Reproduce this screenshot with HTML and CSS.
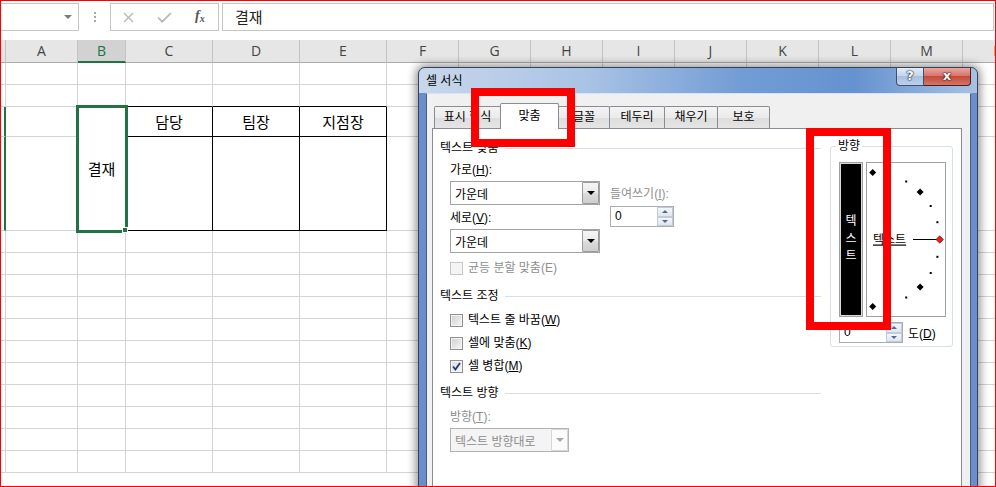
FILE: index.html
```html
<!DOCTYPE html>
<html lang="ko">
<head>
  <meta charset="UTF-8">
  <title>셀 서식</title>
  <link rel="stylesheet" href="styles.css">
</head>
<body>
  <div class="fbar">
    <div class="namebox"><i class="dd"></i></div>
    <div class="grip"><i class="dots"></i></div>
    <div class="fbtns">
      <svg class="ic-x" width="11" height="11" viewBox="0 0 11 11"><path d="M1 1L10 10M10 1L1 10" stroke="#b5b5b5" stroke-width="1.3" fill="none"/></svg>
      <svg class="ic-ok" width="15" height="11" viewBox="0 0 15 11"><path d="M1 5.5l4.2 4.2L14 1" stroke="#b5b5b5" stroke-width="1.7" fill="none"/></svg>
      <span class="fx"><i>f</i><i class="x">x</i></span>
    </div>
    <div class="finput">결재</div>
  </div>

  <table class="sheet">
    <colgroup>
      <col class="c-rh"><col class="c-72"><col class="c-48"><col class="c-87"><col class="c-87"><col class="c-87">
      <col class="c-72"><col class="c-72"><col class="c-72"><col class="c-72"><col class="c-72"><col class="c-72"><col class="c-72"><col class="c-72"><col class="c-72">
    </colgroup>
    <tr class="hdr"><th class="rh"></th><th>A</th><th class="sel">B</th><th>C</th><th>D</th><th>E</th><th>F</th><th>G</th><th>H</th><th>I</th><th>J</th><th>K</th><th>L</th><th>M</th><th>N</th></tr>
    <tr class="r22"><th class="rh"></th><td></td><td></td><td></td><td></td><td></td><td></td><td></td><td></td><td></td><td></td><td></td><td></td><td></td><td></td></tr>
    <tr class="r22"><th class="rh"></th><td></td><td></td><td class="bb"></td><td class="bb"></td><td class="bb"></td><td></td><td></td><td></td><td></td><td></td><td></td><td></td><td></td><td></td></tr>
    <tr class="r30"><th class="rh on"></th><td></td><td class="pick" rowspan="2">결재<span class="handle"></span></td><td class="bx">담당</td><td class="bx">팀장</td><td class="bx">지점장</td><td></td><td></td><td></td><td></td><td></td><td></td><td></td><td></td><td></td></tr>
    <tr class="r94"><th class="rh on"></th><td></td><td class="bx"></td><td class="bx"></td><td class="bx"></td><td></td><td></td><td></td><td></td><td></td><td></td><td></td><td></td><td></td></tr>
    <tr class="r22"><th class="rh"></th><td></td><td></td><td></td><td></td><td></td><td></td><td></td><td></td><td></td><td></td><td></td><td></td><td></td><td></td></tr>
    <tr class="r22"><th class="rh"></th><td></td><td></td><td></td><td></td><td></td><td></td><td></td><td></td><td></td><td></td><td></td><td></td><td></td><td></td></tr>
    <tr class="r22"><th class="rh"></th><td></td><td></td><td></td><td></td><td></td><td></td><td></td><td></td><td></td><td></td><td></td><td></td><td></td><td></td></tr>
    <tr class="r22"><th class="rh"></th><td></td><td></td><td></td><td></td><td></td><td></td><td></td><td></td><td></td><td></td><td></td><td></td><td></td><td></td></tr>
    <tr class="r22"><th class="rh"></th><td></td><td></td><td></td><td></td><td></td><td></td><td></td><td></td><td></td><td></td><td></td><td></td><td></td><td></td></tr>
    <tr class="r22"><th class="rh"></th><td></td><td></td><td></td><td></td><td></td><td></td><td></td><td></td><td></td><td></td><td></td><td></td><td></td><td></td></tr>
    <tr class="r22"><th class="rh"></th><td></td><td></td><td></td><td></td><td></td><td></td><td></td><td></td><td></td><td></td><td></td><td></td><td></td><td></td></tr>
    <tr class="r22"><th class="rh"></th><td></td><td></td><td></td><td></td><td></td><td></td><td></td><td></td><td></td><td></td><td></td><td></td><td></td><td></td></tr>
    <tr class="r22"><th class="rh"></th><td></td><td></td><td></td><td></td><td></td><td></td><td></td><td></td><td></td><td></td><td></td><td></td><td></td><td></td></tr>
    <tr class="r22"><th class="rh"></th><td></td><td></td><td></td><td></td><td></td><td></td><td></td><td></td><td></td><td></td><td></td><td></td><td></td><td></td></tr>
    <tr class="r22"><th class="rh"></th><td></td><td></td><td></td><td></td><td></td><td></td><td></td><td></td><td></td><td></td><td></td><td></td><td></td><td></td></tr>
  </table>

  <!-- 셀 서식 대화상자 -->
  <div class="dlg">
    <div class="dlg-title">
      <span class="dlg-name">셀 서식</span>
      <div class="dlg-btns">
        <span class="btn-help">?</span>
        <span class="btn-close">x</span>
      </div>
    </div>
    <div class="dlg-client">
      <div class="tabs">
        <span class="tab t1">표시 형식</span>
        <span class="tab t2 on">맞춤</span>
        <span class="tab t3">글꼴</span>
        <span class="tab t4">테두리</span>
        <span class="tab t5">채우기</span>
        <span class="tab t6">보호</span>
      </div>
      <div class="panel">
        <div class="left">
          <div class="group">텍스트 맞춤</div>
          <div class="align-grid">
            <div class="col-a">
              <div class="lbl">가로(<u>H</u>):</div>
              <div class="combo"><span>가운데</span><i class="drop"></i></div>
              <div class="lbl lbl-v">세로(<u>V</u>):</div>
              <div class="combo"><span>가운데</span><i class="drop"></i></div>
            </div>
            <div class="col-b">
              <div class="lbl off">들여쓰기(<u>I</u>):</div>
              <div class="spin"><span>0</span><i class="arrows"><b class="up"></b><b class="down"></b></i></div>
            </div>
          </div>
          <div class="chk off chk-first"><i class="box"></i><span>균등 분할 맞춤(E)</span></div>

          <div class="group g2">텍스트 조정</div>
          <div class="chk chk-a"><i class="box"></i><span>텍스트 줄 바꿈(<u>W</u>)</span></div>
          <div class="chk chk-b"><i class="box"></i><span>셀에 맞춤(<u>K</u>)</span></div>
          <div class="chk chk-b"><i class="box checked"><svg width="9" height="9" viewBox="0 0 9 9"><path d="M1 4.5l2.4 3L8 1" stroke="#1f3a78" stroke-width="1.8" fill="none"/></svg></i><span>셀 병합(<u>M</u>)</span></div>

          <div class="group g3">텍스트 방향</div>
          <div class="lbl off lbl-t">방향(<u>T</u>):</div>
          <div class="combo off wide"><span>텍스트 방향대로</span><i class="drop"></i></div>
        </div>

        <fieldset class="dir">
          <legend>방향</legend>
          <div class="dir-row">
            <div class="vtext"><span>텍</span><span>스</span><span>트</span></div>
            <div class="dial">
              <svg width="78" height="153" viewBox="0 0 78 153">
                <defs><polygon id="dm" points="0,-3.5 3.5,0 0,3.5 -3.5,0"/></defs>
                <g fill="#000">
                  <use href="#dm" x="5.7" y="9.5"/>
                  <use href="#dm" x="53.1" y="29.1"/>
                  <use href="#dm" x="53.1" y="123.9"/>
                  <use href="#dm" x="5.7" y="143.5"/>
                  <rect x="22" y="10.8" width="2" height="2"/>
                  <rect x="38.2" y="17.5" width="2" height="2"/>
                  <rect x="62.7" y="42" width="2" height="2"/>
                  <rect x="69.4" y="58.2" width="2" height="2"/>
                  <rect x="69.4" y="92.8" width="2" height="2"/>
                  <rect x="62.7" y="109" width="2" height="2"/>
                  <rect x="38.2" y="133.5" width="2" height="2"/>
                  <rect x="22" y="140.2" width="2" height="2"/>
                </g>
                <line x1="46" y1="76.5" x2="70" y2="76.5" stroke="#000" stroke-width="1"/>
                <polygon points="72.7,72.8 76.4,76.5 72.7,80.2 69,76.5" fill="#e3201b" stroke="#701010" stroke-width=".7"/>
                <text x="6" y="80.5" font-size="12" text-decoration="underline">텍스트</text>
              </svg>
            </div>
          </div>
          <div class="deg-row">
            <div class="spin spin-deg"><span>0</span><i class="arrows"><b class="up"></b><b class="down"></b></i></div>
            <span class="deg">도(<u>D</u>)</span>
          </div>
        </fieldset>
      </div>
    </div>
  </div>

  <div class="mark mark-tab"></div>
  <div class="mark mark-dir"></div>
  <div class="frame"></div>
</body>
</html>
```

FILE: styles.css
```css
* {
  box-sizing: border-box;
}
body {
  margin: 0;
  width: 996px;
  height: 487px;
  overflow: hidden;
  position: relative;
  background: #fff;
  font-family: "Noto Sans CJK KR", "Noto Sans", sans-serif;
  color: #000;
}

/* 수식 입력줄 */
.fbar {
  display: flex;
  align-items: flex-start;
  height: 40px;
  padding-top: 3px;
}
.namebox {
  width: 80px;
  height: 28px;
  margin-left: -1px;
  border: 1px solid #c6c6c6;
  display: flex;
  align-items: center;
  justify-content: flex-end;
  padding-right: 6px;
}
.dd {
  border-left: 4px solid transparent;
  border-right: 4px solid transparent;
  border-top: 4px solid #7a7a7a;
}
.grip {
  width: 31px;
  height: 28px;
  display: flex;
  align-items: center;
  justify-content: center;
}
.dots {
  width: 2px;
  height: 2px;
  background: #a8a8a8;
  box-shadow: 0 -4px #a8a8a8, 0 4px #a8a8a8;
}
.fbtns {
  width: 109px;
  height: 28px;
  border: 1px solid #c6c6c6;
  display: flex;
  align-items: center;
}
.ic-x {
  margin-left: 12px;
}
.ic-ok {
  margin-left: 23px;
}
.fx {
  margin-left: 23px;
  font-family: "Liberation Serif", serif;
  font-weight: bold;
  font-size: 14px;
  color: #555;
  margin-top: -2px;
}
.fx .x {
  font-size: 10px;
  position: relative;
  top: 2px;
}
.finput {
  flex: 1;
  height: 28px;
  margin: 0 2px 0 3px;
  border: 1px solid #c6c6c6;
  padding-left: 12px;
  font-size: 15px;
  line-height: 25px;
  color: #222;
}

/* 시트 */
.sheet {
  border-collapse: separate;
  border-spacing: 0;
  table-layout: fixed;
  width: 1035px;
}
.c-rh { width: 6px; }
.c-48 { width: 48px; }
.c-72 { width: 72px; }
.c-87 { width: 87px; }
.sheet th,
.sheet td {
  padding: 0;
  border-right: 1px solid #d4d4d4;
  border-bottom: 1px solid #d4d4d4;
  text-align: center;
  vertical-align: middle;
  font-size: 15px;
  font-weight: normal;
  line-height: 1;
}
.hdr {
  height: 23px;
}
.hdr th {
  background: #e6e6e6;
  border-right-color: #c3c3c3;
  border-bottom-color: #ababab;
  font-family: "Open Sans", sans-serif;
  font-size: 14px;
  color: #444;
}
.hdr th.sel {
  background: #d2d2d2;
  border-bottom: 2px solid #217346;
  color: #217346;
}
.r22 { height: 22px; }
.r30 { height: 30px; }
.r94 { height: 94px; }
.rh.on {
  border-right: 2px solid #217346;
}
.sheet td.bb {
  border-bottom-color: #000;
}
.sheet td.bx {
  border-right-color: #000;
  border-bottom-color: #000;
}
.sheet td.pick {
  position: relative;
  border-right-color: #000;
  border-bottom-color: #000;
  outline: 3px solid #217346;
  outline-offset: -1px;
}
.handle {
  position: absolute;
  right: -3px;
  bottom: -3px;
  width: 6px;
  height: 6px;
  background: #217346;
  border: 1px solid #fff;
}

/* 대화상자 */
.dlg {
  position: absolute;
  left: 418px;
  top: 67px;
  width: 560px;
  height: 440px;
  border: 1px solid #34445c;
  border-radius: 7px 7px 0 0;
  background: #6a8ecb;
  padding: 0 6px 0 7px;
  box-shadow: 0 0 10px 2px rgba(0, 0, 0, 0.45);
  display: flex;
  flex-direction: column;
  font-family: "Liberation Sans", "Noto Sans CJK KR", sans-serif;
  font-size: 12px;
}
.dlg-title {
  height: 25px;
  margin: 0 -6px 0 -7px;
  padding: 0 6px 0 7px;
  display: flex;
  align-items: flex-start;
  border-radius: 6px 6px 0 0;
  background: linear-gradient(to right, #c8d7eb, #a9c3e5 30%, #729cd4 58%, #6592d0 78%, #a8c1e3);
}
.dlg-name {
  line-height: 24px;
  padding-top: 1px;
}
.dlg-btns {
  margin-left: auto;
  display: flex;
}
.btn-help,
.btn-close {
  height: 18px;
  color: #fff;
  font-family: "DejaVu Sans", sans-serif;
  font-weight: bold;
  font-size: 13px;
  line-height: 16px;
  text-align: center;
  text-shadow: 0 0 2px #1b2a44, 0 0 1px #1b2a44, 0 0 1px #1b2a44;
}
.btn-help {
  width: 28px;
  border: 1px solid #3d5273;
  border-top: 0;
  border-radius: 0 0 0 4px;
  background: linear-gradient(#e3ebf6, #c7d6eb 45%, #a8c0e0 50%, #bcd0ea);
}
.btn-close {
  width: 47px;
  border: 1px solid #4a1f1f;
  border-top: 0;
  border-left: 0;
  border-radius: 0 0 4px 0;
  background: linear-gradient(#eaa79f, #d7766b 45%, #c44a3c 50%, #d27764);
  text-shadow: 0 0 2px #3c0d0d, 0 0 1px #3c0d0d, 0 0 1px #3c0d0d;
}
.dlg-client {
  flex: 1;
  display: flex;
  flex-direction: column;
  background: #f0f0f0;
  border: 1px solid #4c5d77;
  border-top-color: #dbe5f2;
  padding: 9px 8px 0 5px;
}
.tabs {
  display: flex;
  align-items: flex-end;
  height: 25px;
  padding-left: 2px;
}
.tab {
  height: 22px;
  margin-right: -1px;
  border: 1px solid #898c95;
  border-bottom: 0;
  border-radius: 2px 2px 0 0;
  background: linear-gradient(#f3f3f3, #ebebeb 50%, #dddddd 51%, #e5e5e5);
  text-align: center;
  line-height: 20px;
}
.tab.on {
  height: 26px;
  margin-bottom: -1px;
  background: #fff;
  line-height: 24px;
  position: relative;
  z-index: 1;
}
.t1 { width: 67px; }
.t2 { width: 59px; }
.t3 { width: 52px; }
.t4 { width: 56px; }
.t5 { width: 54px; }
.t6 { width: 53px; }
.panel {
  flex: 1;
  display: flex;
  align-items: flex-start;
  background: #fff;
  border: 1px solid #898c95;
  padding: 12px 0 0 7px;
}
.left {
  width: 381px;
}
.group {
  display: flex;
  align-items: center;
  height: 14px;
  line-height: 14px;
}
.group::after {
  content: "";
  flex: 1;
  height: 1px;
  margin-left: 6px;
  background: #d5dfe5;
}
.g2 { margin-top: 14px; }
.g3 { margin-top: 13px; }
.lbl {
  height: 14px;
  line-height: 14px;
}
.off {
  color: #8e8e8e;
}
.align-grid {
  display: flex;
  margin: 8px 0 0 10px;
}
.col-a .combo {
  margin-top: 4px;
}
.lbl-v {
  margin-top: 6px;
}
.col-b {
  margin: 24px 0 0 10px;
}
.combo {
  display: flex;
  align-items: center;
  width: 150px;
  height: 24px;
  border: 1px solid #a3a3a3;
  background: #fff;
  padding-left: 4px;
}
.drop {
  margin-left: auto;
  width: 17px;
  align-self: stretch;
  border: 1px solid #9c9c9c;
  border-radius: 1px;
  background: linear-gradient(#f5f5f5, #ebebeb 50%, #dcdcdc 51%, #cfcfcf);
  display: flex;
  align-items: center;
  justify-content: center;
}
.drop::before {
  content: "";
  border-left: 4px solid transparent;
  border-right: 4px solid transparent;
  border-top: 4px solid #000;
}
.combo.off {
  background: #f4f4f4;
  border-color: #b3b3b3;
}
.combo.off .drop {
  background: #fbfbfb;
  border-color: #d6d6d6;
}
.combo.off .drop::before {
  border-top-color: #a8a8a8;
}
.combo.wide {
  width: 119px;
  margin: 4px 0 0 10px;
}
.lbl-t {
  margin: 10px 0 0 10px;
}
.spin {
  display: flex;
  width: 64px;
  height: 21px;
  margin-top: 5px;
  border: 1px solid #abadb3;
  background: #fff;
  padding-left: 4px;
  line-height: 19px;
}
.arrows {
  margin-left: auto;
  width: 16px;
  display: flex;
  flex-direction: column;
}
.arrows b {
  flex: 1;
  display: flex;
  align-items: center;
  justify-content: center;
  border: 1px solid #c3cbd8;
  background: linear-gradient(#f4f6fa, #dfe5ee);
}
.arrows .up::before {
  content: "";
  border-left: 3px solid transparent;
  border-right: 3px solid transparent;
  border-bottom: 3px solid #4d6a9c;
}
.arrows .down::before {
  content: "";
  border-left: 3px solid transparent;
  border-right: 3px solid transparent;
  border-top: 3px solid #4d6a9c;
}
.chk {
  display: flex;
  align-items: center;
  gap: 5px;
  height: 14px;
  line-height: 14px;
  margin-left: 10px;
}
.chk-first { margin-top: 8px; }
.chk-a { margin-top: 10px; }
.chk-b { margin-top: 9px; }
.box {
  width: 13px;
  height: 13px;
  border: 1px solid #8e8f8f;
  background: linear-gradient(135deg, #cfcfcf, #f7f7f7);
  box-shadow: inset 0 0 0 1px #f4f4f4;
  display: flex;
  align-items: center;
  justify-content: center;
}
.box.checked {
  background: linear-gradient(135deg, #dcdcdc, #fafafa);
}
.chk.off .box {
  border-color: #c6c6c6;
  background: #f4f4f4;
  box-shadow: none;
}

/* 방향 */
.dir {
  margin: -2px 0 0 9px;
  width: 123px;
  min-width: 0;
  border: 1px solid #d5dfe5;
  border-radius: 3px;
  padding: 9px 6px 3px 8px;
}
.dir legend {
  padding: 0 2px;
  margin-left: -3px;
  line-height: 14px;
}
.dir-row {
  display: flex;
  gap: 3px;
}
.vtext {
  width: 24px;
  height: 155px;
  border: 1px solid #a0a0a0;
  box-shadow: inset 0 0 0 1px #d9d9d9;
  background: #000;
  color: #fff;
  display: flex;
  flex-direction: column;
  align-items: center;
  justify-content: center;
}
.vtext span {
  line-height: 17.5px;
}
.dial {
  width: 80px;
  height: 155px;
  border: 1px solid #a0a0a0;
  background: #fff;
}
.dial svg {
  display: block;
  font-family: "Noto Sans CJK KR", sans-serif;
}
.deg-row {
  display: flex;
  align-items: center;
  margin-top: 5px;
}
.spin-deg {
  margin-top: 0;
}
.deg {
  margin-left: 5px;
}

/* 빨간 표시 */
.mark {
  position: absolute;
  border: 8px solid #ff0000;
}
.mark-tab {
  left: 471px;
  top: 88px;
  width: 104px;
  height: 59px;
}
.mark-dir {
  left: 806px;
  top: 128px;
  width: 85px;
  height: 202px;
}
.frame {
  position: absolute;
  left: 0;
  top: 0;
  width: 996px;
  height: 487px;
  border: 1px solid #ff0000;
  pointer-events: none;
}
```
